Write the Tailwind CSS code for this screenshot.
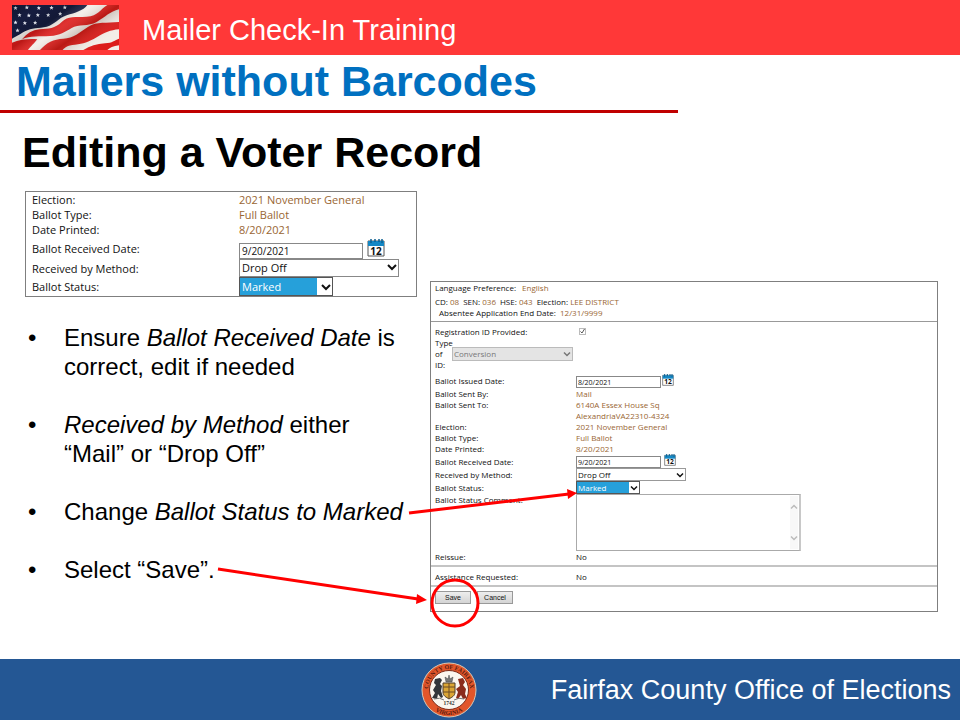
<!DOCTYPE html>
<html lang="en">
<head>
<meta charset="utf-8">
<meta name="viewport" content="width=device-width, initial-scale=1">
<title>Mailer Check-In Training</title>
<script src="https://cdn.jsdelivr.net/npm/@tailwindcss/browser@4"></script>
</head>
<body class="min-h-screen flex flex-col bg-white text-black font-['Liberation_Sans',Arial,sans-serif]">

<svg class="hidden" aria-hidden="true">
  <symbol id="calendar" viewBox="0 0 18 18">
    <path d="M1 2h16v15H1z" fill="#fff" stroke="#555" stroke-width="1"/>
    <path d="M1 2h16v5H1z" fill="#1487c4"/>
    <path d="M4 0v4M8 0v3M12 0v3M15 0v4" stroke="#0b5f90" stroke-width="1.5"/>
    <text x="9" y="15.500" font-size="10" font-weight="bold" text-anchor="middle" fill="#111">12</text>
  </symbol>
  <symbol id="chevron" viewBox="0 0 10 8">
    <path d="M1 2l4 4 4-4" fill="none" stroke="currentColor" stroke-width="2"/>
  </symbol>
  <symbol id="star" viewBox="0 0 20 20">
    <path d="M10 1l2.500 6h6.500l-5 4.500 2 7-6-4-6 4 2-7-5-4.500h6.500z" fill="#e9ecf5"/>
  </symbol>
</svg>

<header class="bg-[#ff3838] flex items-center gap-[23px] px-3 h-[55px]">
  <svg class="w-[107px] h-[45px] shrink-0" viewBox="36 15 321 135" preserveAspectRatio="none" role="img" aria-label="American flag">
    <defs>
      <linearGradient id="folds" x1="0" y1="0" x2="1" y2="0.600">
        <stop offset="0" stop-color="#000" stop-opacity="0.250"/>
        <stop offset="0.200" stop-color="#000" stop-opacity="0"/>
        <stop offset="0.420" stop-color="#000" stop-opacity="0.150"/>
        <stop offset="0.550" stop-color="#fff" stop-opacity="0.100"/>
        <stop offset="0.740" stop-color="#301000" stop-opacity="0.200"/>
        <stop offset="1" stop-color="#fff" stop-opacity="0"/>
      </linearGradient>
    </defs>
    <path d="M36 15h321v135H36z" fill="#f3eee8"/>
    <g fill="#dc1c1a">
      <path d="M66 118C82 100 95 90 120 88S165 86 185 66S225 52 260 50S300 28 322 15H357V28C330 34 315 52 290 66S235 72 215 84S180 106 150 108S90 106 66 118z"/>
      <path d="M36 128C60 118 90 116 112 118C104 128 90 142 84 150H36z"/>
      <path d="M120 150C140 128 160 117 190 116S240 96 265 80S320 70 357 66V88C330 90 315 98 290 112S250 132 225 134S195 142 188 150z"/>
      <path d="M250 150C270 138 290 132 315 130S340 122 357 116V136C340 138 328 144 322 150z"/>
    </g>
    <path d="M36 15H262C250 32 225 38 200 46S165 74 140 80S95 82 75 94S50 108 36 116z" fill="#161d40"/>
    <g>
      <use href="#star" x="38" y="17" width="17" height="14"/>
      <use href="#star" x="72" y="15" width="17" height="14"/>
      <use href="#star" x="108" y="17" width="17" height="14"/>
      <use href="#star" x="146" y="16" width="17" height="14"/>
      <use href="#star" x="186" y="15" width="17" height="14"/>
      <use href="#star" x="50" y="38" width="17" height="14"/>
      <use href="#star" x="78" y="39" width="17" height="14"/>
      <use href="#star" x="105" y="38" width="17" height="14"/>
      <use href="#star" x="136" y="38" width="17" height="14"/>
      <use href="#star" x="172" y="34" width="17" height="14"/>
      <use href="#star" x="38" y="60" width="17" height="14"/>
      <use href="#star" x="66" y="62" width="17" height="14"/>
      <use href="#star" x="97" y="61" width="17" height="14"/>
      <use href="#star" x="44" y="84" width="17" height="14"/>
    </g>
    <path d="M36 15h321v135H36z" fill="url(#folds)"/>
  </svg>
  <p class="text-[29px] leading-8 text-white pt-1">Mailer Check-In Training</p>
</header>

<main class="relative flex-1 pb-11">
  <h1 class="w-[678px] max-w-full border-b-3 border-[#c00000] pl-4 pb-1 pt-px text-[43px] leading-[50px] font-bold text-[#0070c0]">Mailers without Barcodes</h1>
  <h2 class="pl-[22px] pt-[14px] text-[43px] leading-[50px] font-bold">Editing a Voter Record</h2>

  <div class="flex items-start pr-[22px] pt-[14px]">
    <section class="w-[430px] shrink-0">
      <form class="ml-[25px] mr-[13px] border border-[#7f7f7f] pl-1.5 font-['Open_Sans',sans-serif] text-[11px] leading-[15px] text-[#111]">
        <dl class="grid grid-cols-[207px_1fr]">
          <dt>Election:</dt><dd class="text-[#996633]">2021 November General</dd>
          <dt>Ballot Type:</dt><dd class="text-[#996633]">Full Ballot</dd>
          <dt>Date Printed:</dt><dd class="text-[#996633]">8/20/2021</dd>
        </dl>
        <div class="grid grid-cols-[207px_1fr] items-center">
          <label for="received">Ballot Received Date:</label>
          <div class="flex items-end gap-1 h-[22px]">
            <input id="received" value="9/20/2021" class="w-[124px] h-4 border border-[#888] px-0.5 text-[10px]">
            <svg class="size-[18px] mb-0.5"><use href="#calendar"/></svg>
          </div>
          <label for="method">Received by Method:</label>
          <div class="relative w-40">
            <select id="method" class="block appearance-none w-full h-[18px] border border-[#888] bg-white px-0.5 leading-4"><option>Drop Off</option><option>Mail</option></select>
            <svg class="absolute right-0.5 top-1 w-2.5 h-2 pointer-events-none"><use href="#chevron"/></svg>
          </div>
          <label for="status">Ballot Status:</label>
          <div class="relative w-[94px]">
            <select id="status" class="block appearance-none w-full h-[19px] border border-[#555] bg-linear-to-r from-[#26a0da] from-84% to-white to-84% px-0.5 leading-4 text-white"><option>Marked</option></select>
            <svg class="absolute right-0.5 top-1.5 w-2.5 h-2 pointer-events-none"><use href="#chevron"/></svg>
          </div>
        </div>
      </form>

      <ul class="mt-[26px] ml-7 flex flex-col gap-[29px] text-[24px] leading-[29px]">
        <li class="flex"><span class="w-9 shrink-0">•</span><p>Ensure <em>Ballot Received Date</em> is<br>correct, edit if needed</p></li>
        <li class="flex"><span class="w-9 shrink-0">•</span><p><em>Received by Method</em> either<br>“Mail” or “Drop Off”</p></li>
        <li class="flex"><span class="w-9 shrink-0">•</span><p>Change <em>Ballot Status to Marked</em></p></li>
        <li class="flex"><span class="w-9 shrink-0">•</span><p>Select “Save”.</p></li>
      </ul>
    </section>

    <form class="mt-[90px] flex-1 border border-[#7f7f7f] pb-[7px] font-['Open_Sans',sans-serif] text-[8px] leading-[11px] text-[#111]">
      <div class="pl-1">
        <p>Language Preference: <span class="ml-1 text-[#996633]">English</span></p>
        <p class="mt-[3px] flex gap-1"><span>CD: <b class="font-normal text-[#996633]">08</b></span><span>SEN: <b class="font-normal text-[#996633]">036</b></span><span>HSE: <b class="font-normal text-[#996633]">043</b></span><span>Election: <b class="font-normal text-[#996633]">LEE DISTRICT</b></span></p>
        <p class="pl-1">Absentee Application End Date: <span class="ml-0.5 text-[#996633]">12/31/9999</span></p>
      </div>
      <hr class="mt-[3px] border-[#999]">
      <div class="pl-1 pt-1">
        <div class="grid grid-cols-[141px_1fr] items-center">
          <label for="regid">Registration ID Provided:</label>
          <span class="relative ml-[3px] size-[7px]">
            <input id="regid" type="checkbox" checked disabled class="block appearance-none size-[7px] border border-[#bbb] bg-white">
            <svg class="absolute inset-0 size-[7px]" viewBox="0 0 7 7"><path d="M1.500 3.500l1.500 1.500 2.500-4" fill="none" stroke="#555" stroke-width="1"/></svg>
          </span>
        </div>
        <div class="flex items-center">
          <label for="idtype" class="w-[17px]">Type<br>of<br>ID:</label>
          <div class="relative w-[121px]">
            <select id="idtype" disabled class="block appearance-none w-full h-3.5 border border-[#bbb] bg-[#e4e4e4] px-px leading-3 text-[#777] opacity-100"><option>Conversion</option></select>
            <svg class="absolute right-0.5 top-1 w-2 h-1.5 text-[#777]"><use href="#chevron"/></svg>
          </div>
        </div>
        <div class="mt-0.5 grid grid-cols-[141px_1fr] items-center">
          <label for="issued">Ballot Issued Date:</label>
          <div class="flex items-end gap-px h-4">
            <input id="issued" value="8/20/2021" class="w-[85px] h-3 border border-[#888] px-px text-[7px]">
            <svg class="size-3 mb-0.5"><use href="#calendar"/></svg>
          </div>
        </div>
        <dl class="grid grid-cols-[141px_1fr]">
          <dt>Ballot Sent By:</dt><dd class="text-[#996633]">Mail</dd>
          <dt>Ballot Sent To:</dt><dd class="text-[#996633]">6140A Essex House Sq<br>AlexandriaVA22310-4324</dd>
          <dt>Election:</dt><dd class="text-[#996633]">2021 November General</dd>
          <dt>Ballot Type:</dt><dd class="text-[#996633]">Full Ballot</dd>
          <dt>Date Printed:</dt><dd class="text-[#996633]">8/20/2021</dd>
        </dl>
        <div class="grid grid-cols-[141px_1fr] items-center">
          <label for="received2">Ballot Received Date:</label>
          <div class="flex items-end gap-[3px] h-3.5">
            <input id="received2" value="9/20/2021" class="w-[85px] h-3 border border-[#888] px-px text-[7px]">
            <svg class="size-3 mb-0.5"><use href="#calendar"/></svg>
          </div>
          <label for="method2">Received by Method:</label>
          <div class="relative w-[110px]">
            <select id="method2" class="block appearance-none w-full h-[13px] border border-[#999] bg-white px-px leading-[11px]"><option>Drop Off</option><option>Mail</option></select>
            <svg class="absolute right-0.5 top-1 w-2 h-1.5 pointer-events-none"><use href="#chevron"/></svg>
          </div>
          <label for="status2">Ballot Status:</label>
          <div class="relative w-16">
            <select id="status2" class="block appearance-none w-full h-[13px] border border-[#555] bg-linear-to-r from-[#26a0da] from-84% to-white to-84% px-px leading-[11px] text-white"><option>Marked</option></select>
            <svg class="absolute right-0.5 top-1 w-2 h-1.5 pointer-events-none"><use href="#chevron"/></svg>
          </div>
        </div>
        <div class="grid grid-cols-[141px_1fr] items-start">
          <label for="comment">Ballot Status Comment:</label>
          <div class="relative w-[225px]">
            <textarea id="comment" class="block w-full h-[57px] resize-none border border-r-2 border-[#aaa] border-r-[#c8c8c8] bg-white"></textarea>
            <div class="absolute right-[3px] top-0.5 bottom-0.5 w-2 bg-[#f8f8f8] text-[#bbb] flex flex-col items-center justify-between py-2">
              <svg class="w-2 h-1.5 rotate-180"><use href="#chevron"/></svg>
              <svg class="w-2 h-1.5"><use href="#chevron"/></svg>
            </div>
          </div>
        </div>
        <dl class="grid grid-cols-[141px_1fr]"><dt>Reissue:</dt><dd>No</dd></dl>
      </div>
      <hr class="mt-[3px] border-t-2 border-[#c4c4c4]">
      <dl class="pl-1 mt-1 mb-[3px] grid grid-cols-[141px_1fr]"><dt>Assistance Requested:</dt><dd>No</dd></dl>
      <hr class="border-t-2 border-[#c4c4c4]">
      <div class="pl-1 mt-1 flex gap-1.5 font-['Liberation_Sans',Arial,sans-serif] text-[7px] leading-[11px]">
        <button type="button" class="w-9 h-[13px] border border-[#999] bg-linear-to-b from-[#eee] to-[#d4d4d4]">Save</button>
        <button type="button" class="w-9 h-[13px] border border-[#999] bg-linear-to-b from-[#eee] to-[#d4d4d4]">Cancel</button>
      </div>
    </form>
  </div>

  <svg class="absolute left-0 top-0 w-[960px] max-w-full h-[600px] pointer-events-none overflow-hidden" aria-hidden="true">
    <g fill="none" stroke="#f00" stroke-width="3">
      <path d="M409 458L569 439"/>
      <path d="M218 514L418 544"/>
      <circle cx="455" cy="548" r="23"/>
    </g>
    <path d="M577 438L567 434L568 444zM427 545L416 549L417 539z" fill="#f00"/>
  </svg>
</main>

<footer class="relative bg-[#245794] h-[61px] flex items-center justify-end pr-[9px]">
  <svg class="absolute left-[420px] top-0.5 size-[58px]" viewBox="0 0 58 58" role="img" aria-label="County of Fairfax Virginia seal">
    <defs>
      <path id="arcTop" d="M8 29a21 21 0 0 1 42 0"/>
      <path id="arcBottom" d="M4 29a25 25 0 0 0 50 0"/>
    </defs>
    <circle cx="29" cy="29" r="27" fill="#e2562a" stroke="#d8c8b4" stroke-width="1"/>
    <circle cx="29" cy="29" r="19.500" fill="#fbf6ee" stroke="#7a2a18" stroke-width="1"/>
    <g font-family="Liberation Serif" font-weight="bold" font-size="6" fill="#5a1c10" text-anchor="middle">
      <text><textPath href="#arcTop" startOffset="50%">COUNTY OF FAIRFAX</textPath></text>
      <text><textPath href="#arcBottom" startOffset="50%">VIRGINIA</textPath></text>
      <text x="29" y="44" font-size="5.500" fill="#333">1742</text>
    </g>
    <path d="M23 22h12v9c0 4-3 5-6 7c-3-2-6-3-6-7z" fill="#dba634" stroke="#4a3a2a" stroke-width="1"/>
    <path d="M23 26h12M23 31h12M29 22v15" stroke="#6a4a24" stroke-width="1"/>
    <path d="M26 21l-1-5 3 2 1-4 1 4 3-2-1 5z" fill="#777" stroke="#444" stroke-width=".5"/>
    <path d="M20 17l-5 1-1 4 2 2-3 5 2 3-3 5 5 1 1-5 3 4 2-1-2-6 1-5-2-2 2-4z" fill="#33363a"/>
    <path d="M38 18l5-1 2 4-2 3 3 4-1 5 2 4-4 1-2-4-3 4-2-1 2-6-2-3 4-3z" fill="#8a2c1c"/>
    <path d="M14 38q6-2 10 1M34 39q5-3 10-1" fill="none" stroke="#777" stroke-width="1"/>
  </svg>
  <p class="text-[27px] leading-8 text-white">Fairfax County Office of Elections</p>
</footer>
</body>
</html>
